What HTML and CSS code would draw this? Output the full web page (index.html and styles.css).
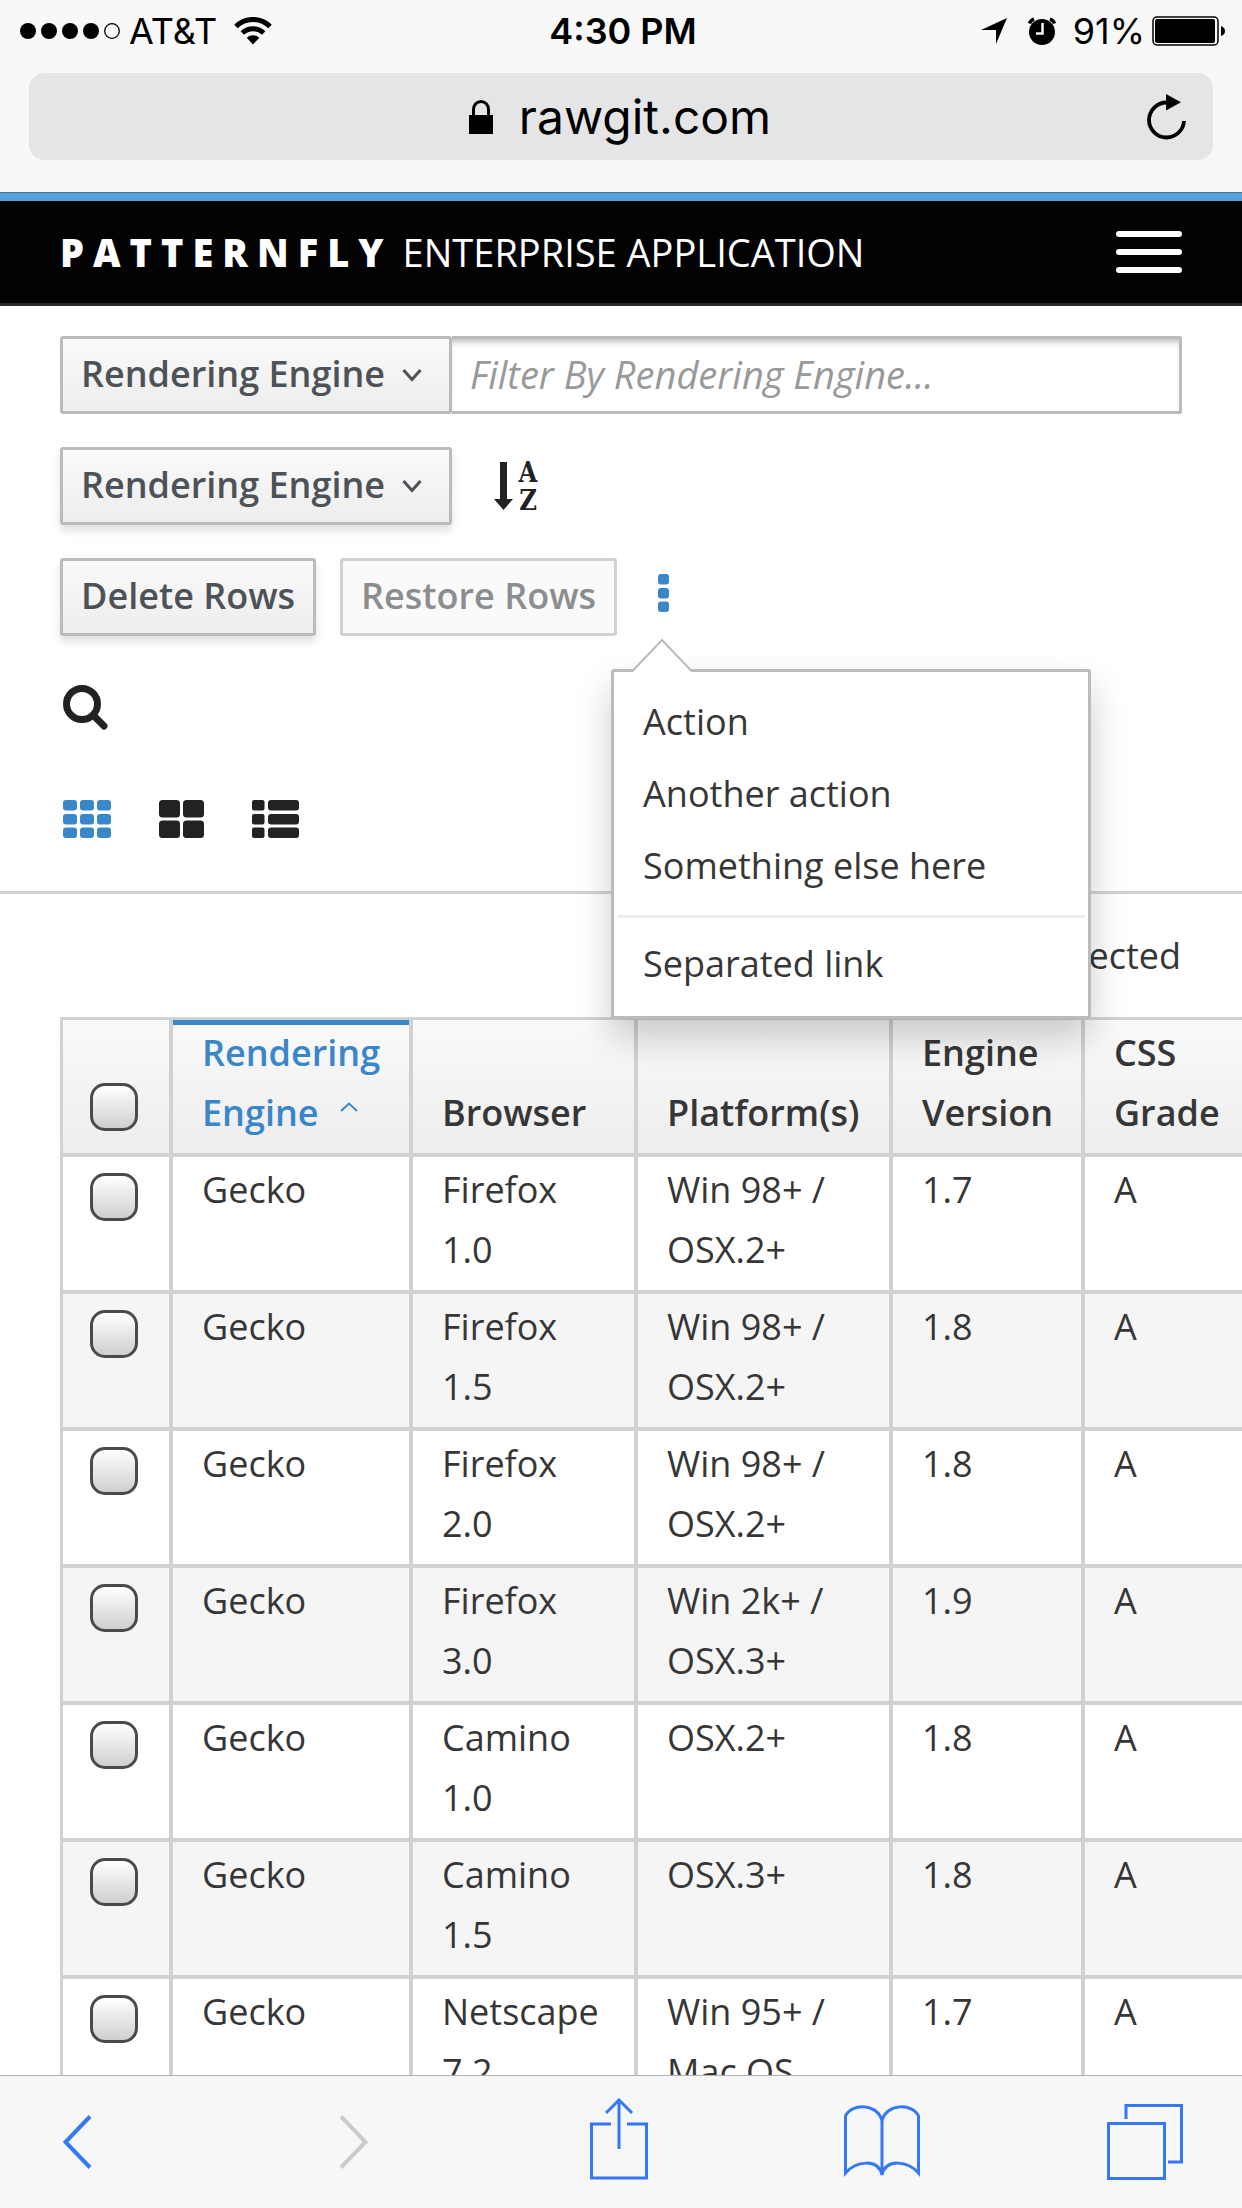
FILE: index.html
```html
<!DOCTYPE html>
<html lang="en">
<head>
<meta charset="utf-8">
<meta name="viewport" content="width=device-width">
<title>PatternFly Enterprise Application</title>
<link rel="stylesheet" href="styles.css">
</head>
<body>
<header class="browser">
  <div class="status">
    <div class="status-side">
      <svg width="100" height="16" viewBox="0 0 100 16" aria-hidden="true"><circle cx="8" cy="8" r="8"/><circle cx="29" cy="8" r="8"/><circle cx="50" cy="8" r="8"/><circle cx="71" cy="8" r="8"/><circle cx="92" cy="8" r="7.3" fill="none" stroke="#000" stroke-width="1.3"/></svg>
      <span class="carrier">AT&amp;T</span>
      <svg width="38" height="28" viewBox="0 0 38 28" aria-hidden="true"><path d="M2 9.5a24 24 0 0 1 34 0M8.300 16a15.500 15.500 0 0 1 21.400 0" fill="none" stroke="#000" stroke-width="5"/><path d="M19 27.500l-6.300-6.800a9.500 9.500 0 0 1 12.600 0z"/></svg>
    </div>
    <span class="clock">4:30 PM</span>
    <div class="status-side status-end">
      <svg width="28" height="28" viewBox="0 0 28 28" aria-hidden="true"><path d="M27 1L16 27V13H1z"/></svg>
      <svg class="alarm" width="30" height="28" viewBox="0 0 30 28" aria-hidden="true"><circle cx="15" cy="15" r="13"/><path d="M2.500 6.500A7 7 0 0 1 7 2.200M27.500 6.500A7 7 0 0 0 23 2.200" fill="none" stroke="#000" stroke-width="3.500"/><path d="M15.500 6v10.500H9" fill="none" stroke="#f8f8f8" stroke-width="2.500"/></svg>
      <span>91%</span>
      <svg width="74" height="30" viewBox="0 0 74 30" aria-hidden="true"><rect x="1" y="1" width="65" height="28" rx="4" fill="none" stroke="#000" stroke-width="1.500"/><rect x="3" y="3" width="60" height="24" rx="2"/><path d="M69 10q4 1.500 4 5t-4 5z"/></svg>
    </div>
  </div>
  <div class="url">
    <button class="address" type="button">
      <svg width="24" height="34" viewBox="0 0 24 34" aria-hidden="true"><path d="M0 15h24v19H0z"/><path d="M4.500 16V9.500a7.500 8 0 0 1 15 0V16" fill="none" stroke="#000" stroke-width="3"/></svg>
      rawgit.com
    </button>
    <button class="reload" type="button" aria-label="Reload">
      <svg width="40" height="46" viewBox="0 0 40 46" aria-hidden="true"><path d="M37 27A17.500 17.500 0 1 1 19.500 8.500" fill="none" stroke="#000" stroke-width="3.800"/><path d="M19 0l15 8.200-15 8.300z"/></svg>
    </button>
  </div>
</header>

<main class="page">
  <nav class="navbar">
    <a class="brand" href="#"><b>PATTERNFLY</b><span>ENTERPRISE APPLICATION</span></a>
    <button class="menu-toggle" type="button" aria-label="Toggle navigation"><i></i><i></i><i></i></button>
  </nav>

  <section class="toolbar">
    <div class="row filter">
      <div class="select">
        <select aria-label="Filter field"><option>Rendering Engine</option></select>
        <svg width="20" height="14" viewBox="0 0 20 14" aria-hidden="true"><path d="M1.500 2L10 11.500 18.500 2"/></svg>
      </div>
      <input class="filter-text" type="text" aria-label="Filter" placeholder="Filter By Rendering Engine...">
    </div>
    <div class="row">
      <div class="select raised">
        <select aria-label="Sort field"><option>Rendering Engine</option></select>
        <svg width="20" height="14" viewBox="0 0 20 14" aria-hidden="true"><path d="M1.500 2L10 11.500 18.500 2"/></svg>
      </div>
      <button class="icon sort" type="button" aria-label="Sort ascending">
        <svg width="48" height="50" viewBox="0 0 48 50" aria-hidden="true"><path d="M6 1h7v37h6L9.500 49 0 38h6z"/><text x="34" y="21">A</text><text x="34" y="49">Z</text></svg>
      </button>
    </div>
    <div class="row">
      <button class="btn raised" type="button">Delete Rows</button>
      <button class="btn" type="button" disabled>Restore Rows</button>
      <div class="dropdown">
        <button class="icon kebab" type="button" aria-label="More actions" aria-expanded="true">
          <svg width="11" height="38" viewBox="0 0 11 38" aria-hidden="true"><rect width="11" height="10.500" rx="3"/><rect y="14" width="11" height="10.500" rx="3"/><rect y="27.500" width="11" height="10.500" rx="3"/></svg>
        </button>
        <div class="menu">
          <svg class="menu-arrow" width="62" height="34" viewBox="0 0 62 34" aria-hidden="true"><path d="M1 34V32.500L31 1l30 31.500V34z" fill="#fff"/><path d="M1 32.500L31 1l30 31.500" fill="none" stroke="#bbb" stroke-width="2"/></svg>
          <a href="#">Action</a>
          <a href="#">Another action</a>
          <a href="#">Something else here</a>
          <hr>
          <a href="#">Separated link</a>
        </div>
      </div>
    </div>
    <div class="row">
      <button class="icon" type="button" aria-label="Search">
        <svg width="46" height="46" viewBox="0 0 46 46" aria-hidden="true"><circle cx="19" cy="19" r="15.500" fill="none" stroke="#222" stroke-width="7"/><path d="M30.500 30.500L41 41" stroke="#222" stroke-width="7" stroke-linecap="round"/></svg>
      </button>
    </div>
    <div class="row views">
      <button class="icon active" type="button" aria-label="Table view">
        <svg width="48" height="38" viewBox="0 0 48 38" aria-hidden="true"><rect width="14" height="10.500" rx="3"/><rect x="17" width="14" height="10.500" rx="3"/><rect x="34" width="14" height="10.500" rx="3"/><rect y="14" width="14" height="10.500" rx="3"/><rect x="17" y="14" width="14" height="10.500" rx="3"/><rect x="34" y="14" width="14" height="10.500" rx="3"/><rect y="27.500" width="14" height="10.500" rx="3"/><rect x="17" y="27.500" width="14" height="10.500" rx="3"/><rect x="34" y="27.500" width="14" height="10.500" rx="3"/></svg>
      </button>
      <button class="icon" type="button" aria-label="Card view">
        <svg width="45" height="38" viewBox="0 0 45 38" aria-hidden="true"><rect width="21" height="17.500" rx="3.500"/><rect x="24" width="21" height="17.500" rx="3.500"/><rect y="20.500" width="21" height="17.500" rx="3.500"/><rect x="24" y="20.500" width="21" height="17.500" rx="3.500"/></svg>
      </button>
      <button class="icon" type="button" aria-label="List view">
        <svg width="47" height="38" viewBox="0 0 47 38" aria-hidden="true"><rect width="12.500" height="10.500" rx="2"/><rect x="16" width="31" height="10.500" rx="3"/><rect y="14" width="12.500" height="10.500" rx="2"/><rect x="16" y="14" width="31" height="10.500" rx="3"/><rect y="27.500" width="12.500" height="10.500" rx="2"/><rect x="16" y="27.500" width="31" height="10.500" rx="3"/></svg>
      </button>
    </div>
  </section>

  <p class="selection">0 selected</p>

  <div class="table-wrap">
    <table>
      <colgroup><col class="c-check"><col class="c-engine"><col class="c-browser"><col class="c-platform"><col class="c-version"><col></colgroup>
      <thead>
        <tr>
          <th class="check"><input type="checkbox" aria-label="Select all rows"></th>
          <th class="sorted">Rendering Engine <svg width="18" height="10" viewBox="0 0 18 10" aria-hidden="true"><path d="M1 9L9 1.500 17 9" fill="none" stroke="#3986c9" stroke-width="2"/></svg></th>
          <th>Browser</th><th>Platform(s)</th><th>Engine Version</th><th>CSS Grade</th>
        </tr>
      </thead>
      <tbody>
        <tr><td class="check"><input type="checkbox" aria-label="Select row 1"></td><td>Gecko</td><td>Firefox 1.0</td><td>Win 98+ / OSX.2+</td><td>1.7</td><td>A</td></tr>
        <tr><td class="check"><input type="checkbox" aria-label="Select row 2"></td><td>Gecko</td><td>Firefox 1.5</td><td>Win 98+ / OSX.2+</td><td>1.8</td><td>A</td></tr>
        <tr><td class="check"><input type="checkbox" aria-label="Select row 3"></td><td>Gecko</td><td>Firefox 2.0</td><td>Win 98+ / OSX.2+</td><td>1.8</td><td>A</td></tr>
        <tr><td class="check"><input type="checkbox" aria-label="Select row 4"></td><td>Gecko</td><td>Firefox 3.0</td><td>Win 2k+ / OSX.3+</td><td>1.9</td><td>A</td></tr>
        <tr><td class="check"><input type="checkbox" aria-label="Select row 5"></td><td>Gecko</td><td>Camino<br>1.0</td><td>OSX.2+</td><td>1.8</td><td>A</td></tr>
        <tr><td class="check"><input type="checkbox" aria-label="Select row 6"></td><td>Gecko</td><td>Camino<br>1.5</td><td>OSX.3+</td><td>1.8</td><td>A</td></tr>
        <tr><td class="check"><input type="checkbox" aria-label="Select row 7"></td><td>Gecko</td><td>Netscape 7.2</td><td>Win 95+ / Mac OS</td><td>1.7</td><td>A</td></tr>
      </tbody>
    </table>
  </div>
</main>

<footer class="tabbar">
  <button type="button" aria-label="Back"><svg width="29" height="54" viewBox="0 0 29 54" aria-hidden="true"><path d="M27 1.500L2.500 27 27 52.500" stroke-width="4"/></svg></button>
  <button type="button" aria-label="Forward" disabled><svg width="29" height="54" viewBox="0 0 29 54" aria-hidden="true"><path d="M2 1.500L26.500 27 2 52.500" stroke-width="4"/></svg></button>
  <button class="tall" type="button" aria-label="Share"><svg width="58" height="82" viewBox="0 0 58 82" aria-hidden="true"><path d="M21 26H1.500v54h55V26H37M29 51V2M16 15L29 2l13 13"/></svg></button>
  <button type="button" aria-label="Bookmarks"><svg width="76" height="74" viewBox="0 0 76 74" aria-hidden="true"><path d="M38 16C34-2 7-2 1.500 11V68C12 56 34 53 38 70 42 53 64 56 74.500 68V11C69-2 42-2 38 16zM38 14v56"/></svg></button>
  <button type="button" aria-label="Tabs"><svg width="76" height="76" viewBox="0 0 76 76" aria-hidden="true"><path d="M1.500 19.500h56v55h-56zM19 15V1.500h55.500V58H61"/></svg></button>
</footer>
</body>
</html>
```

FILE: styles.css
```css
* { box-sizing: border-box; }

body {
  margin: 0;
  height: 100vh;
  display: flex;
  flex-direction: column;
  overflow: hidden;
  background: #fff;
  color: #363636;
  font: 36px/60px "Open Sans", "Noto Sans", sans-serif;
}

button, input, select { margin: 0; font: inherit; color: inherit; }
button { padding: 0; border: 0; background: none; }
svg { display: block; flex: none; }

/* Browser chrome */
.browser {
  flex: none;
  padding-bottom: 32px;
  background: #f8f8f8;
  border-bottom: 1px solid #3f7396;
  color: #000;
  font-family: Inter, "Liberation Sans", sans-serif;
}
.status {
  display: grid;
  grid-template-columns: 1fr auto 1fr;
  align-items: center;
  height: 61px;
  padding: 0 16px 0 20px;
}
.status-side { display: flex; align-items: center; gap: 9px; }
.status-end { justify-content: flex-end; gap: 7px; }
.carrier { margin-right: 8px; }
.clock { font-weight: 600; }
.alarm { margin: 0 9px 0 12px; }
.url {
  display: flex;
  align-items: center;
  height: 87px;
  margin: 12px 29px 0;
  border-radius: 15px;
  background: #e5e5e7;
}
.address {
  flex: 1;
  display: flex;
  align-items: center;
  justify-content: center;
  gap: 26px;
  padding-left: 64px;
  font-size: 48px;
}
.reload { width: 66px; }

/* Page */
.page { flex: 1; min-height: 0; overflow: hidden; }
.navbar {
  display: flex;
  align-items: center;
  justify-content: space-between;
  height: 113px;
  padding: 0 60px;
  border-top: 8px solid #58a1d7;
  border-bottom: 3px solid #292929;
  background: #020202;
}
.brand {
  display: flex;
  gap: 10px;
  color: #fff;
  font-size: 38px;
  text-decoration: none;
}
.brand b { font-weight: 800; letter-spacing: 9px; }
.menu-toggle {
  display: flex;
  flex-direction: column;
  gap: 12px;
  width: 66px;
}
.menu-toggle i { height: 6px; border-radius: 3px; background: #fff; }

.toolbar {
  display: flex;
  flex-direction: column;
  gap: 33px;
  padding: 30px 60px 33px;
  border-bottom: 3px solid #d1d1d1;
}
.row { display: flex; align-items: center; gap: 24px; height: 78px; }
.row.filter { gap: 0; }

.select { display: grid; align-items: center; width: 392px; }
.select select, .select svg { grid-area: 1 / 1; }
.select svg {
  justify-self: end;
  margin-right: 30px;
  fill: none;
  stroke: #4d5258;
  stroke-width: 3;
  pointer-events: none;
}
.select select, .btn {
  height: 78px;
  padding: 0 18px 2px;
  border: 3px solid #bbb;
  border-radius: 3px;
  background: linear-gradient(#fafafa, #ededed);
  color: #4d5258;
  font-weight: 600;
}
.select select { appearance: none; }
.btn:disabled { border-color: #d1d1d1; background: #fafafa; color: #8b8d8f; }
.raised { border-radius: 3px; box-shadow: 0 6px 9px rgba(3, 3, 3, .12); }
.filter-text {
  flex: 1;
  min-width: 0;
  height: 78px;
  padding: 0 18px 2px;
  border: 3px solid #bbb;
  border-left: 0;
  border-radius: 0 3px 3px 0;
  background: #fff;
  box-shadow: inset 0 6px 6px -3px rgba(3, 3, 3, .25);
  font-size: 38px;
}
.filter-text::placeholder { color: #999; font-style: italic; opacity: 1; }

.icon { display: flex; justify-content: center; padding: 0 3px; color: #222; fill: #222; }
.icon.active, .kebab { fill: #3986c9; }
.sort { padding: 0 18px; }
.sort svg { overflow: visible; }
.sort text { font: bold 27px/1 "DejaVu Serif Condensed", "DejaVu Serif", serif; text-anchor: middle; }
.views { gap: 42px; }

.dropdown { position: relative; display: flex; align-items: center; height: 78px; }
.kebab { width: 45px; padding-bottom: 8px; }
.menu {
  position: absolute;
  z-index: 1;
  top: 111px;
  left: -30px;
  width: 480px;
  padding: 14px 0 16px;
  border: 3px solid #bbb;
  border-radius: 3px;
  background: #fff;
  box-shadow: 0 18px 36px rgba(3, 3, 3, .2);
}
.menu-arrow { position: absolute; top: -33px; left: 17px; }
.menu a {
  display: block;
  padding: 0 29px;
  color: #363636;
  line-height: 72px;
  text-decoration: none;
}
.menu hr { height: 3px; margin: 13px 3px 10px; border: 0; background: #ededed; }

.selection { margin: 0; padding: 32px 61px 31px; text-align: right; }

/* Results */
.table-wrap { padding-left: 60px; }
table {
  width: 100%;
  table-layout: fixed;
  border-spacing: 0;
  border: 3px solid #d1d1d1;
  border-width: 3px 0 0 3px;
}
.c-check { width: 110px; }
.c-engine { width: 240px; }
.c-browser { width: 225px; }
.c-platform { width: 255px; }
.c-version { width: 192px; }
th, td {
  padding: 3px 24px 10px 29px;
  border: 4px solid #d1d1d1;
  border-width: 0 4px 4px 0;
  text-align: left;
  vertical-align: top;
}
th:last-child, td:last-child { border-right: 0; padding-right: 0; }
th { font-weight: 600; vertical-align: bottom; background: linear-gradient(#fafafa, #ededed); }
th.sorted { color: #3986c9; box-shadow: inset 0 5px #3986c9; }
th.sorted svg { display: inline-block; margin: 0 0 14px 12px; vertical-align: baseline; }
tbody tr:nth-child(even) { background: #f5f5f5; }
.check { padding: 16px 0 0 27px; }
th.check { padding-bottom: 22px; }
.check input {
  display: block;
  appearance: none;
  width: 48px;
  height: 48px;
  border: 3px solid #4a4a4a;
  border-radius: 15px;
  background: linear-gradient(#fff, #cfcfcf);
}

/* Bottom bar */
.tabbar {
  flex: none;
  display: grid;
  grid-template-columns: 216fr 274fr 258fr 268fr 226fr;
  align-items: center;
  justify-items: center;
  height: 133px;
  border-top: 1px solid #b2b2b2;
  background: #f7f7f7;
  fill: none;
  stroke: #3478f6;
  stroke-width: 3;
}
.tabbar button:first-child { justify-self: start; margin-left: 63px; }
.tabbar button:last-child { justify-self: end; margin-right: 59px; }
.tabbar button:disabled { stroke: #ccc; }
.tabbar .tall { padding-bottom: 6px; }
```
